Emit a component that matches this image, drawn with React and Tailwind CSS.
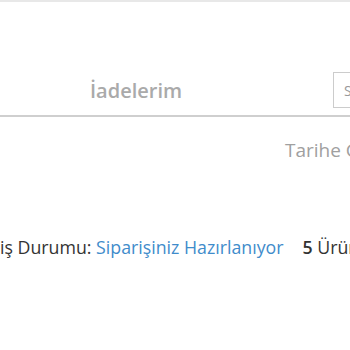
import React from 'react';

export default function App() {
  return (
    <div
      className="h-[350px] w-[350px] overflow-hidden bg-white"
      style={{ fontFamily: '"Open Sans", "Liberation Sans", sans-serif' }}
    >
      <div className="h-[2px] bg-[#e8e8e8]" />
      <div className="flex h-[113px] items-end pb-[7px]">
        <div className="flex h-[36px] w-[333px] shrink-0 items-center pl-[90px] pt-[2px]">
          <span className="whitespace-nowrap text-[20px] font-semibold text-[#aaaaaa]">
            İadelerim
          </span>
        </div>
        <div className="flex h-[36px] w-[140px] shrink-0 items-center border border-[#cccccc] pl-[10px] text-[14px] text-[#999999]">
          Sipariş Ara
        </div>
      </div>
      <div className="h-[2px] bg-[#cfcfcf]" />
      <div className="mt-[20px] whitespace-nowrap pl-[285px] text-[19px] leading-[26px] text-[#a0a0a0]">
        Tarihe Göre Sırala
      </div>
      <div className="mt-[72px] flex items-center whitespace-nowrap text-[17.75px] leading-[24px]">
        <span className="text-[#333333]">iş Durumu:&nbsp;</span>
        <span className="text-[#3f8ccb]">Siparişiniz Hazırlanıyor</span>
        <span className="ml-[19px] text-[#333333]">
          <b className="font-semibold">5</b> Ürün
        </span>
      </div>
    </div>
  );
}
